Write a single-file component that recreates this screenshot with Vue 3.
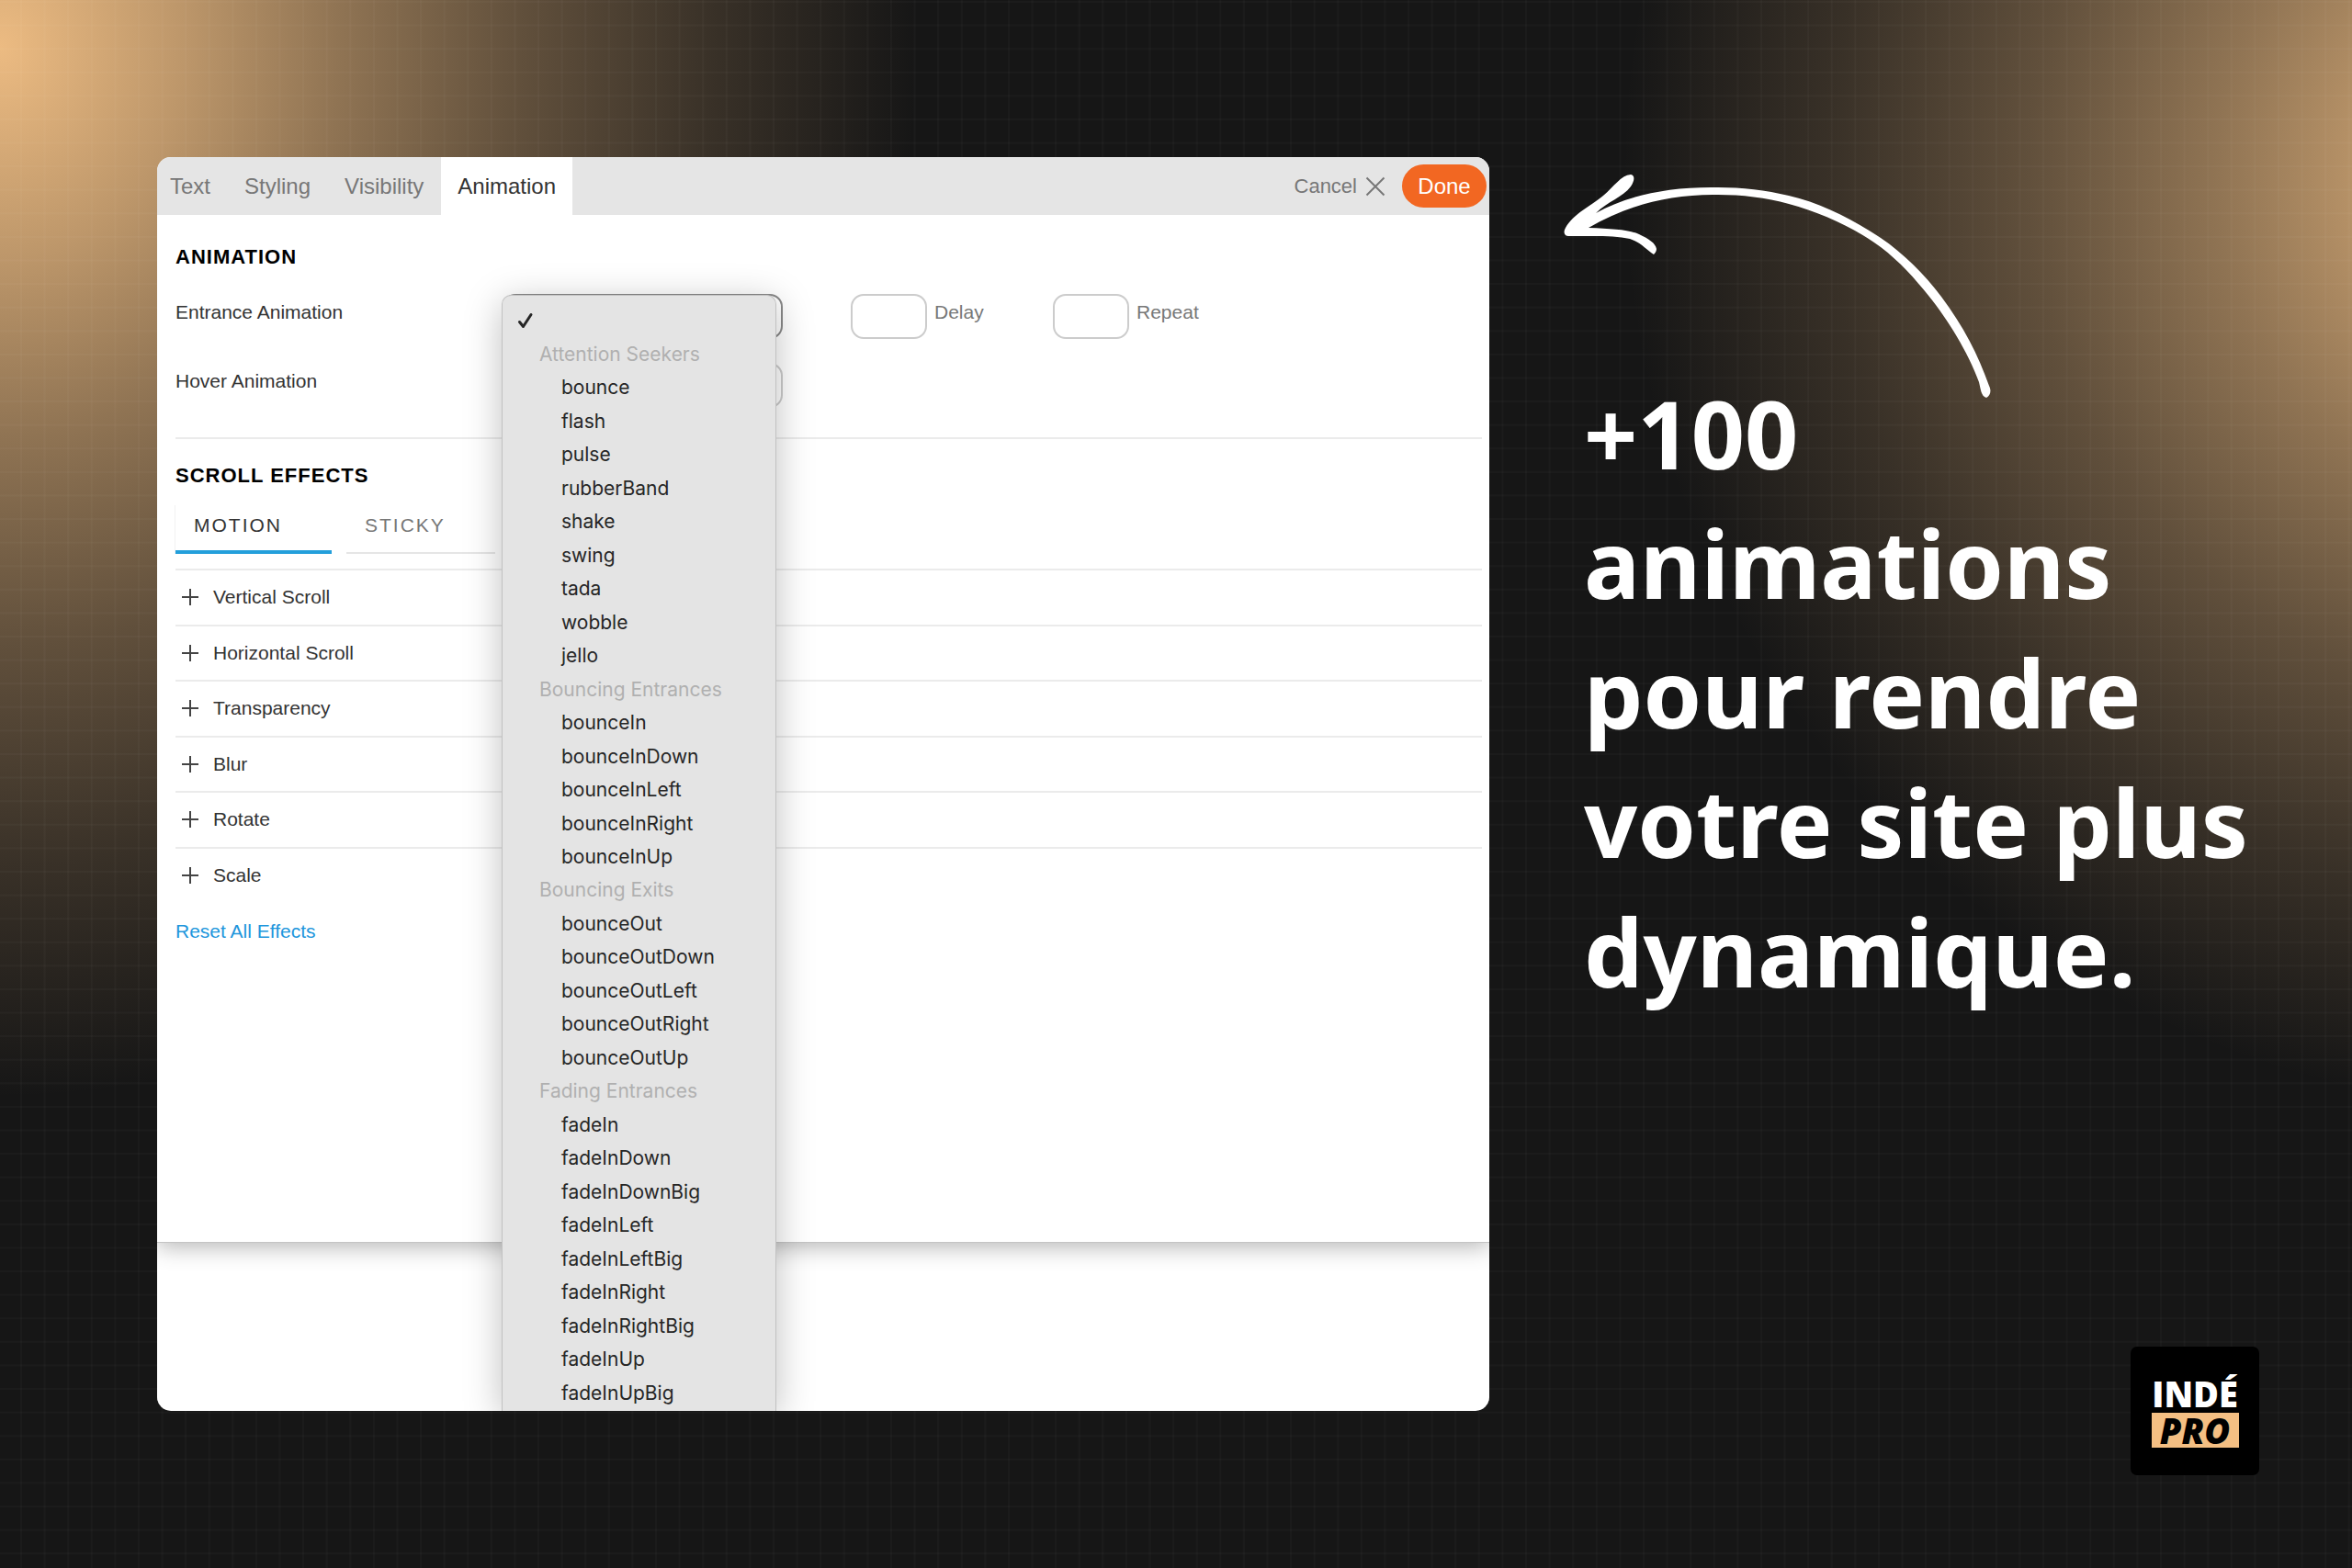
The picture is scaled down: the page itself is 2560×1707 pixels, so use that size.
<script setup>
import { ref } from "vue";

const tabs = ["Text", "Styling", "Visibility", "Animation"];
const activeTab = ref("Animation");

const effectTabs = ["MOTION", "STICKY"];
const activeEffectTab = ref("MOTION");

const effects = ["Vertical Scroll", "Horizontal Scroll", "Transparency", "Blur", "Rotate", "Scale"];

const groups = [
  {
    label: "Attention Seekers",
    items: ["bounce", "flash", "pulse", "rubberBand", "shake", "swing", "tada", "wobble", "jello"]
  },
  {
    label: "Bouncing Entrances",
    items: ["bounceIn", "bounceInDown", "bounceInLeft", "bounceInRight", "bounceInUp"]
  },
  {
    label: "Bouncing Exits",
    items: ["bounceOut", "bounceOutDown", "bounceOutLeft", "bounceOutRight", "bounceOutUp"]
  },
  {
    label: "Fading Entrances",
    items: [
      "fadeIn",
      "fadeInDown",
      "fadeInDownBig",
      "fadeInLeft",
      "fadeInLeftBig",
      "fadeInRight",
      "fadeInRightBig",
      "fadeInUp",
      "fadeInUpBig"
    ]
  }
];

const entrance = ref("");
const delay = ref("");
const repeat = ref("");
</script>

<template>
  <main class="slide">
    <section class="window">
      <header class="toolbar">
        <nav class="tabs">
          <button
            v-for="tab in tabs"
            :key="tab"
            type="button"
            class="tab"
            :class="{ active: tab === activeTab }"
            @click="activeTab = tab"
          >
            {{ tab }}
          </button>
        </nav>
        <div class="actions">
          <button type="button" class="cancel">
            Cancel
            <svg class="cancel-icon" viewBox="0 0 22 22" aria-hidden="true">
              <path d="M1.5 1.5 20.5 20.5M20.5 1.5 1.5 20.5" />
            </svg>
          </button>
          <button type="button" class="done">Done</button>
        </div>
      </header>

      <div class="panel">
        <h2 class="heading">ANIMATION</h2>
        <div class="field-row">
          <label for="entrance" class="field-label">Entrance Animation</label>
          <select id="entrance" v-model="entrance" class="select focused">
            <option value=""></option>
          </select>
          <div class="small-field">
            <input id="delay" v-model="delay" type="text" class="small-input" />
            <label for="delay">Delay</label>
          </div>
          <div class="small-field">
            <input id="repeat" v-model="repeat" type="text" class="small-input" />
            <label for="repeat">Repeat</label>
          </div>
        </div>
        <div class="field-row">
          <label for="hover" class="field-label">Hover Animation</label>
          <select id="hover" class="select">
            <option value=""></option>
          </select>
        </div>

        <hr class="divider" />

        <h2 class="heading">SCROLL EFFECTS</h2>
        <div class="effect-tabs">
          <button
            v-for="tab in effectTabs"
            :key="tab"
            type="button"
            class="effect-tab"
            :class="{ active: tab === activeEffectTab }"
            @click="activeEffectTab = tab"
          >
            {{ tab }}
          </button>
        </div>
        <ul class="effects">
          <li v-for="effect in effects" :key="effect" class="effect">
            <button type="button" class="effect-toggle">
              <svg class="plus" viewBox="0 0 18 18" aria-hidden="true">
                <path d="M9 0V18M0 9H18" />
              </svg>
              {{ effect }}
            </button>
          </li>
        </ul>
        <a href="#" class="reset">Reset All Effects</a>
      </div>

      <div class="menu" role="listbox" aria-label="Entrance Animation">
        <div class="menu-item" role="option" :aria-selected="entrance === ''">
          <svg class="check" viewBox="0 0 18 18" aria-hidden="true">
            <path d="M2.5 10.5 6.5 15.5 15 2.5" />
          </svg>
        </div>
        <template v-for="group in groups" :key="group.label">
          <div class="menu-item menu-group">{{ group.label }}</div>
          <div
            v-for="item in group.items"
            :key="item"
            class="menu-item menu-option"
            role="option"
            :aria-selected="entrance === item"
            @click="entrance = item"
          >
            {{ item }}
          </div>
        </template>
      </div>
    </section>

    <aside class="pitch">
      <svg class="arrow" viewBox="0 0 520 280" aria-hidden="true">
        <path
          d="M24 77C32 62 52 53 65 42C77 32 84 20 95 19C100 20 99 26 95 32C86 44 70 48 57 61C92 42 135 32 190 33C216 33 242 36 267 42C303 50 338 69 367 88C392 105 414 127 433 152C457 184 473 215 485 249C488 255 486 260 482 262C476 260 476 253 474 245C462 212 440 177 420 152C404 132 388 114 367 98C337 76 303 61 267 51C242 44 216 41 190 41C137 40 90 53 49 77C75 78 93 79 104 84C115 89 122 94 123 100C123 103 121 105 120 106C112 101 106 93 94 89C77 85 55 86 27 86C23 86 21 82 24 77Z"
        />
      </svg>
      <h1 class="title">+100 animations pour rendre votre site plus dynamique.</h1>
      <div class="logo">
        <span class="logo-top">INDÉ</span>
        <span class="logo-bottom">PRO</span>
      </div>
    </aside>
  </main>
</template>

<style>
body {
  margin: 0;
  background: #161616;
}
</style>

<style scoped>
.slide {
  --glow:
    rgb(236, 187, 130) 0%, rgba(236, 187, 130, 0.78) 20%, rgba(236, 187, 130, 0.57) 37%,
    rgba(236, 187, 130, 0.35) 57%, rgba(236, 187, 130, 0.16) 78%, rgba(236, 187, 130, 0) 100%;
  box-sizing: border-box;
  min-height: 100vh;
  padding: 171px 101px 101px 171px;
  display: flex;
  align-items: stretch;
  gap: 80px;
  background:
    linear-gradient(90deg, rgba(255, 255, 255, 0.025) 2px, transparent 2px) 22px 0 / 1vw 1vw,
    linear-gradient(rgba(255, 255, 255, 0.025) 2px, transparent 2px) 0 1px / 1vw 1vw,
    radial-gradient(ellipse 39vw 67vh at 0 3vh, var(--glow)),
    radial-gradient(ellipse 40vw 60vh at 109vw 11vh, var(--glow)),
    #161616;
  font-family: "Liberation Sans", Arial, sans-serif;
  font-size: 21px;
  line-height: 24px;
  color: #333;
}

button {
  padding: 0;
  border: 0;
  background: none;
  font: inherit;
  color: inherit;
  cursor: pointer;
}

.window {
  position: relative;
  flex: 1;
  align-self: flex-start;
  box-sizing: border-box;
  padding-bottom: 183px;
  background: #fff;
  border-radius: 15px;
  overflow: hidden;
}

.toolbar {
  position: relative;
  z-index: 1;
  display: flex;
  justify-content: space-between;
  height: 63px;
  background: #e5e5e5;
  color: #777;
}

.tabs {
  display: flex;
  gap: 1px;
}

.tab {
  padding: 0 18px;
  font-size: 24px;
}

.tab:first-child {
  padding-left: 14px;
}

.tab.active {
  background: #fff;
  color: #333;
}

.actions {
  display: flex;
  align-items: center;
  gap: 18px;
  padding-right: 3px;
}

.cancel {
  display: flex;
  align-items: center;
  gap: 9px;
  font-size: 22px;
}

.cancel-icon {
  width: 22px;
  height: 22px;
  fill: none;
  stroke: #777;
  stroke-width: 2;
}

.done {
  width: 92px;
  height: 47px;
  border-radius: 24px;
  background: #f26722;
  color: #fff;
  font-size: 24px;
}

.panel {
  min-height: 934px;
  padding: 34px 8px 150px 20px;
  border-bottom: 1px solid #c4c4c4;
  box-shadow: 0 4px 24px rgba(0, 0, 0, 0.3);
}

.heading {
  margin: 0;
  color: #000;
  font-size: 22px;
  line-height: 24px;
  letter-spacing: 1px;
}

.field-row {
  display: flex;
  align-items: flex-start;
  height: 50px;
  margin-top: 25px;
}

.heading + .field-row {
  margin-top: 28px;
}

.field-label {
  width: 356px;
  padding-top: 8px;
}

.select {
  box-sizing: border-box;
  width: 305px;
  height: 49px;
  border: 2px solid #ccc;
  border-radius: 14px;
  background: #fff;
  appearance: none;
}

.select.focused {
  border-color: #8a8a8a;
}

.small-field {
  display: flex;
  gap: 8px;
  width: 146px;
  margin-left: 74px;
  color: #777;
}

.small-field label {
  padding-top: 8px;
}

.small-input {
  box-sizing: border-box;
  width: 83px;
  height: 49px;
  border: 2px solid #ccc;
  border-radius: 14px;
  background: #fff;
}

.divider {
  margin: 31px 0 28px;
  border: 0;
  border-top: 2px solid #ebebeb;
}

.effect-tabs {
  display: flex;
  gap: 16px;
  margin-top: 20px;
}

.effect-tab {
  box-sizing: border-box;
  width: 162px;
  height: 53px;
  padding: 0 20px 8px;
  border-bottom: 2px solid #e5e5e5;
  color: #777;
  letter-spacing: 2px;
  text-align: left;
}

.effect-tab.active {
  width: 170px;
  padding-bottom: 6px;
  border-bottom: 4px solid #239fdb;
  box-shadow: -1px 0 0 #f2f2f2;
  color: #333;
}

.effects {
  display: flex;
  flex-direction: column;
  height: 363px;
  margin: 16px 0 0;
  padding: 0;
  list-style: none;
}

.effect {
  flex: 1;
  display: flex;
  align-items: center;
  border-top: 2px solid #ebebeb;
}

.effect-toggle {
  display: flex;
  align-items: center;
  gap: 16px;
  padding-left: 7px;
}

.plus {
  width: 18px;
  height: 18px;
  fill: none;
  stroke: #444;
  stroke-width: 2;
}

.reset {
  display: inline-block;
  margin-top: 20px;
  color: #1e96dc;
  text-decoration: none;
}

.menu {
  position: absolute;
  top: 150px;
  bottom: 0;
  left: 375px;
  box-sizing: border-box;
  width: 299px;
  padding: 9px 0 1px;
  display: flex;
  flex-direction: column;
  border: 1px solid #c2c2c2;
  border-bottom: 0;
  border-radius: 10px 10px 0 0;
  background: #e4e4e4;
  box-shadow: 0 8px 40px rgba(0, 0, 0, 0.25);
  color: #262626;
  font-family: Inter, "Liberation Sans", sans-serif;
  font-size: 21px;
}

.menu-item {
  flex: 1;
  display: flex;
  align-items: center;
  padding-left: 16px;
}

.menu-group {
  padding-left: 40px;
  color: #b0b0b0;
}

.menu-option {
  padding-left: 64px;
}

.check {
  width: 18px;
  height: 18px;
  fill: none;
  stroke: #262626;
  stroke-width: 3;
  stroke-linecap: round;
  stroke-linejoin: round;
}

.pitch {
  flex: 0 0 758px;
  display: flex;
  flex-direction: column;
}

.arrow {
  width: 520px;
  height: 280px;
  margin-left: -21px;
  fill: #fff;
}

/* the first line tucks in under the tail of the arrow */
.title {
  margin: -50px 0 0 23px;
  color: #fff;
  font-family: "Noto Sans", "Open Sans", sans-serif;
  font-size: 102px;
  font-weight: 700;
  line-height: 141px;
}

.logo {
  box-sizing: border-box;
  width: 140px;
  height: 140px;
  margin-top: auto;
  margin-left: auto;
  padding-top: 32px;
  display: flex;
  flex-direction: column;
  align-items: center;
  gap: 2px;
  border-radius: 7px;
  background: #000;
  font-family: "Open Sans", "Noto Sans", sans-serif;
  font-size: 38px;
  font-weight: 800;
  line-height: 38px;
}

.logo-top {
  color: #fff;
}

.logo-bottom {
  width: 95px;
  background: #f4bf83;
  color: #000;
  font-style: italic;
  text-align: center;
}
</style>
